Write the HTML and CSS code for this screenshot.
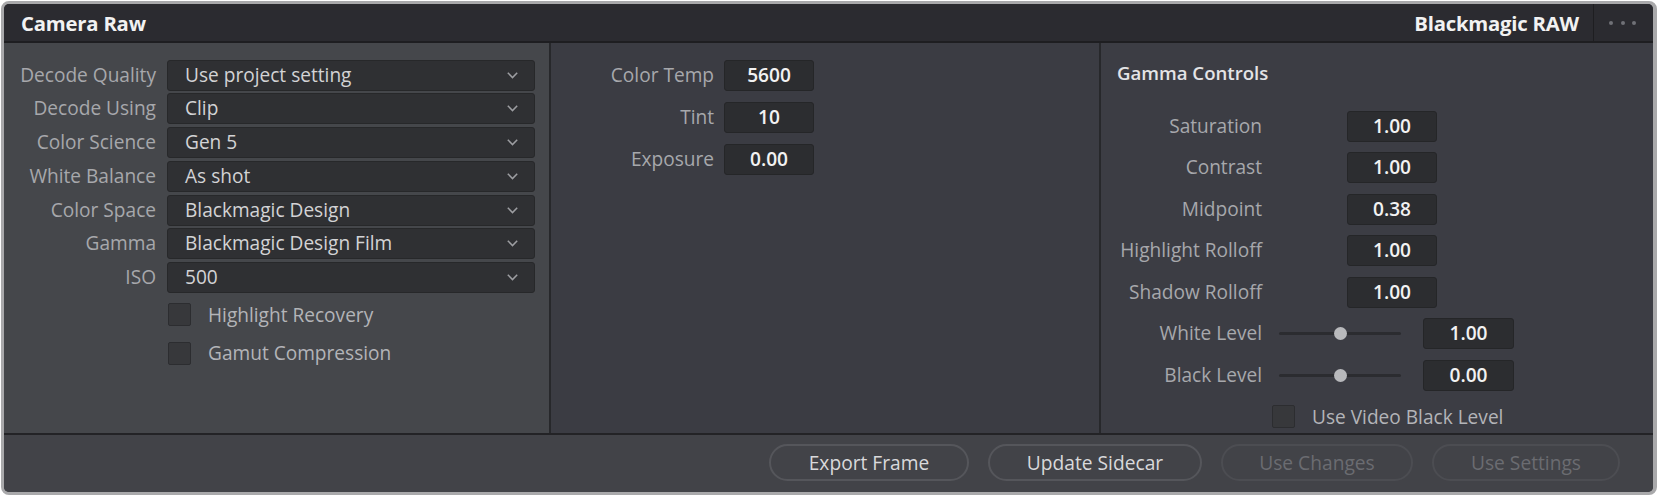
FILE: index.html
```html
<!DOCTYPE html>
<html>
<head>
<meta charset="utf-8">
<title>Camera Raw</title>
<link rel="stylesheet" href="styles.css">
</head>
<body>
<div class="frame">
  <div class="panel">
    <header class="hdr">
      <div class="hdr-title">Camera Raw</div>
      <div class="hdr-right">
        <div class="hdr-sub">Blackmagic RAW</div>
        <div class="hdr-menu"><span class="dot"></span><span class="dot"></span><span class="dot"></span></div>
      </div>
    </header>
    <main class="cols">
      <section class="col col1">
        <div class="form">
          <label class="lbl">Decode Quality</label>
          <div class="dd"><span>Use project setting</span><svg class="chev" viewBox="0 0 11 7"><polyline points="0.8,0.8 5.5,5.6 10.2,0.8"/></svg></div>
          <label class="lbl">Decode Using</label>
          <div class="dd"><span>Clip</span><svg class="chev" viewBox="0 0 11 7"><polyline points="0.8,0.8 5.5,5.6 10.2,0.8"/></svg></div>
          <label class="lbl">Color Science</label>
          <div class="dd"><span>Gen 5</span><svg class="chev" viewBox="0 0 11 7"><polyline points="0.8,0.8 5.5,5.6 10.2,0.8"/></svg></div>
          <label class="lbl">White Balance</label>
          <div class="dd"><span>As shot</span><svg class="chev" viewBox="0 0 11 7"><polyline points="0.8,0.8 5.5,5.6 10.2,0.8"/></svg></div>
          <label class="lbl">Color Space</label>
          <div class="dd"><span>Blackmagic Design</span><svg class="chev" viewBox="0 0 11 7"><polyline points="0.8,0.8 5.5,5.6 10.2,0.8"/></svg></div>
          <label class="lbl">Gamma</label>
          <div class="dd"><span>Blackmagic Design Film</span><svg class="chev" viewBox="0 0 11 7"><polyline points="0.8,0.8 5.5,5.6 10.2,0.8"/></svg></div>
          <label class="lbl">ISO</label>
          <div class="dd"><span>500</span><svg class="chev" viewBox="0 0 11 7"><polyline points="0.8,0.8 5.5,5.6 10.2,0.8"/></svg></div>
        </div>
        <div class="checks">
          <div class="chk-row"><span class="chk"></span><span class="chk-lbl">Highlight Recovery</span></div>
          <div class="chk-row"><span class="chk"></span><span class="chk-lbl">Gamut Compression</span></div>
        </div>
      </section>
      <section class="col col2">
        <div class="form2">
          <label class="lbl">Color Temp</label><div class="num">5600</div>
          <label class="lbl">Tint</label><div class="num">10</div>
          <label class="lbl">Exposure</label><div class="num">0.00</div>
        </div>
      </section>
      <section class="col col3">
        <h2 class="gc-title">Gamma Controls</h2>
        <div class="gc-rows">
          <div class="gc-row"><label class="lbl gc-lbl">Saturation</label><div class="num gc-num">1.00</div></div>
          <div class="gc-row"><label class="lbl gc-lbl">Contrast</label><div class="num gc-num">1.00</div></div>
          <div class="gc-row"><label class="lbl gc-lbl">Midpoint</label><div class="num gc-num">0.38</div></div>
          <div class="gc-row"><label class="lbl gc-lbl">Highlight Rolloff</label><div class="num gc-num">1.00</div></div>
          <div class="gc-row"><label class="lbl gc-lbl">Shadow Rolloff</label><div class="num gc-num">1.00</div></div>
          <div class="gc-row"><label class="lbl gc-lbl">White Level</label><div class="slider"><span class="knob"></span></div><div class="num sl-num">1.00</div></div>
          <div class="gc-row"><label class="lbl gc-lbl">Black Level</label><div class="slider"><span class="knob"></span></div><div class="num sl-num">0.00</div></div>
          <div class="gc-row gc-chk"><span class="chk"></span><span class="chk-lbl">Use Video Black Level</span></div>
        </div>
      </section>
    </main>
    <footer class="ftr">
      <button class="btn w1">Export Frame</button>
      <button class="btn w2">Update Sidecar</button>
      <button class="btn w3 off">Use Changes</button>
      <button class="btn w4 off">Use Settings</button>
    </footer>
  </div>
</div>
</body>
</html>
```
FILE: styles.css
```css
* { box-sizing: border-box; }
html, body { margin: 0; padding: 0; }
body {
  width: 1659px;
  height: 496px;
  background: #ffffff;
  font-family: "Open Sans", "Liberation Sans", sans-serif;
  font-size: 19.1px;
  overflow: hidden;
}
.frame {
  margin: 1px 0 0 1px;
  width: 1656px;
  height: 494px;
  border: 3px solid #a9a9ab;
  border-radius: 8px;
  background: #a9a9ab;
}
.panel {
  width: 1649px;
  height: 488px;
  border-radius: 5px;
  overflow: hidden;
  display: flex;
  flex-direction: column;
  background: #424348;
}
.hdr {
  height: 39px;
  flex: none;
  background: #2b2b30;
  border-bottom: 2px solid #1e1e21;
  display: flex;
  align-items: center;
  justify-content: space-between;
  padding-left: 17px;
}
.hdr-title, .hdr-sub {
  color: #f2f2f2;
  font-weight: 700;
  font-size: 20.3px;
  letter-spacing: -0.2px;
}
.hdr-title { padding-top: 1px; }
.hdr-right { display: flex; align-items: stretch; height: 100%; }
.hdr-sub { display: flex; align-items: center; padding-right: 14px; padding-top: 1px; }
.hdr-menu {
  width: 60px;
  border-left: 1px solid #1e1e21;
  display: flex;
  align-items: center;
  justify-content: center;
  gap: 7.5px;
  padding-right: 2px;
}
.dot { width: 4px; height: 4px; border-radius: 50%; background: #707176; }
.cols {
  flex: none;
  height: 392px;
  display: flex;
  border-bottom: 2px solid #232326;
}
.col { height: 100%; }
.col1 { width: 547px; background: #45474b; border-right: 2px solid #27282b; padding-top: 16.5px; }
.col2 { width: 550px; background: #3b3c43; border-right: 2px solid #27282b; padding-top: 17px; }
.col3 { flex: 1; background: #3c3d44; padding: 16.5px 0 0 0; }
.lbl {
  color: #a7a8ac;
  text-align: right;
  white-space: nowrap;
  line-height: 31px;
}
.form {
  display: grid;
  grid-template-columns: 152px 368px;
  column-gap: 11px;
  row-gap: 2.8px;
  grid-auto-rows: 31px;
}
.dd {
  background: #2f3033;
  border: 1px solid #27282a;
  border-radius: 3px;
  display: flex;
  align-items: center;
  justify-content: space-between;
  padding: 0 16px 0 17px;
  color: #d3d3d5;
  line-height: 29px;
  white-space: nowrap;
}
.chev { width: 11px; height: 7px; fill: none; stroke: #9d9ea2; stroke-width: 1.5; }
.checks { padding: 10px 0 0 164px; display: flex; flex-direction: column; gap: 15.5px; }
.chk-row { display: flex; align-items: center; height: 23px; }
.chk {
  width: 23px; height: 23px;
  flex: none;
  background: #37383b;
  border: 1px solid #2c2d30;
  border-radius: 2px;
}
.chk-lbl { color: #b3b4b8; margin-left: 17px; white-space: nowrap; }
.form2 {
  display: grid;
  grid-template-columns: 163px 90px;
  column-gap: 10px;
  row-gap: 11px;
  grid-auto-rows: 31px;
}
.num {
  background: #2c2d30;
  border: 1px solid #252628;
  border-radius: 3px;
  color: #f2f2f2;
  font-weight: 600;
  text-align: center;
  line-height: 29px;
  width: 90px;
  height: 31px;
}
.gc-title {
  margin: 0 0 25px 16px;
  font-size: 18.6px;
  font-weight: 600;
  color: #e4e4e6;
  line-height: 26px;
}
.gc-rows { display: flex; flex-direction: column; gap: 10.5px; }
.gc-row { display: flex; align-items: center; height: 31px; }
.gc-lbl { width: 161px; flex: none; }
.gc-num { margin-left: 85px; }
.slider {
  width: 122px;
  height: 3px;
  margin-left: 17px;
  background: #2b2c30;
  border-radius: 2px;
  display: flex;
  align-items: center;
  justify-content: center;
}
.knob { width: 13px; height: 13px; border-radius: 50%; background: #b8b9bc; flex: none; }
.sl-num { margin-left: 22px; width: 91px; }
.gc-chk { padding-left: 171px; height: 31px; }
.ftr {
  flex: 1;
  display: flex;
  justify-content: flex-end;
  align-items: flex-start;
  padding: 9px 33px 0 0;
  gap: 19px;
  background: #424348;
}
.btn {
  height: 37px;
  border-radius: 19px;
  border: 2px solid #55565b;
  background: #424348;
  color: #d9d9db;
  font-family: "Open Sans", "Liberation Sans", sans-serif;
  font-size: 19.2px;
  padding: 0;
  text-align: center;
}
.btn.off { color: #6b6c71; border-color: #4c4d52; }
.w1 { width: 200px; }
.w2 { width: 214px; }
.w3 { width: 192px; }
.w4 { width: 188px; }
```
